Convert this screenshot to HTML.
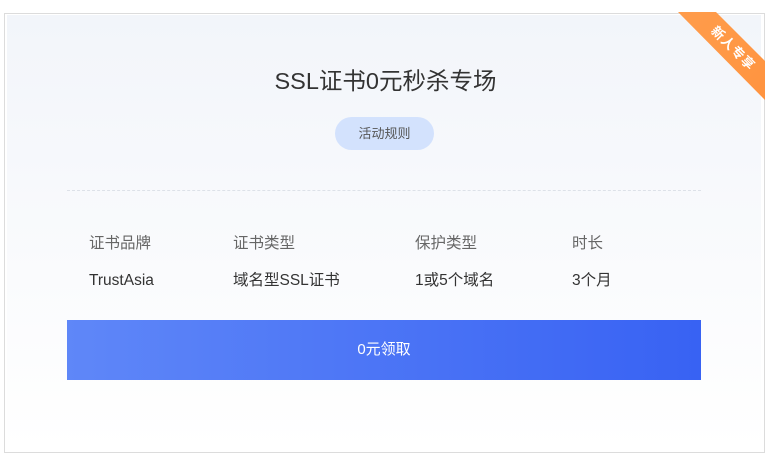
<!DOCTYPE html>
<html><head><meta charset="utf-8"><style>
*{margin:0;padding:0;box-sizing:border-box}
body{width:771px;height:466px;background:#fff;font-family:"Liberation Sans","Noto Sans CJK SC",sans-serif;position:relative;overflow:hidden}
.outer{position:absolute;left:4px;top:13px;width:761px;height:440px;border:1px solid #dcdcdc;background:#fff}
.inner{position:absolute;left:7px;top:15px;width:754px;height:435px;background:linear-gradient(#f2f5fa,#fafbfd 60%,#fff)}
.title{position:absolute;left:0;width:771px;top:62px;text-align:center;font-size:23.5px;color:#333}
.rule{position:absolute;left:335px;top:117px;width:99px;height:33px;border-radius:17px;background:#d3e2fd;color:#555;font-size:13px;text-align:center;line-height:33px}
.hr{position:absolute;left:67px;top:190px;width:634px;border-top:1px dashed #dde1e8}
.t{position:absolute;font-size:15.5px;line-height:20px}
.h{color:#666;top:234px}
.v{color:#333;top:271px}
.btn{position:absolute;left:67px;top:320px;width:634px;height:60px;background:linear-gradient(90deg,#5f87f8,#3862f3);color:#fff;font-size:15px;text-align:center;line-height:60px}
.rib{position:absolute;left:0;top:0;width:771px;height:466px;clip-path:polygon(678px 12px,716px 12px,765px 61px,765px 100px);background:linear-gradient(135deg,#ffb06a 0%,#ff9a48 60%,#ff7f24 100%)}
.rt{position:absolute;left:699px;top:38px;width:70px;text-align:center;transform:rotate(45deg);color:#fff;font-size:13px;font-weight:bold;letter-spacing:1px}
</style></head><body>
<div class="outer"></div>
<div class="inner"></div>
<div class="title">SSL证书0元秒杀专场</div>
<div class="rule">活动规则</div>
<div class="hr"></div>
<div class="t h" style="left:89px">证书品牌</div>
<div class="t h" style="left:233px">证书类型</div>
<div class="t h" style="left:415px">保护类型</div>
<div class="t h" style="left:572px">时长</div>
<div class="t v" style="left:89px">TrustAsia</div>
<div class="t v" style="left:233px">域名型SSL证书</div>
<div class="t v" style="left:415px">1或5个域名</div>
<div class="t v" style="left:572px">3个月</div>
<div class="btn">0元领取</div>
<div class="rib"></div>
<div class="rt">新人专享</div>
</body></html>
